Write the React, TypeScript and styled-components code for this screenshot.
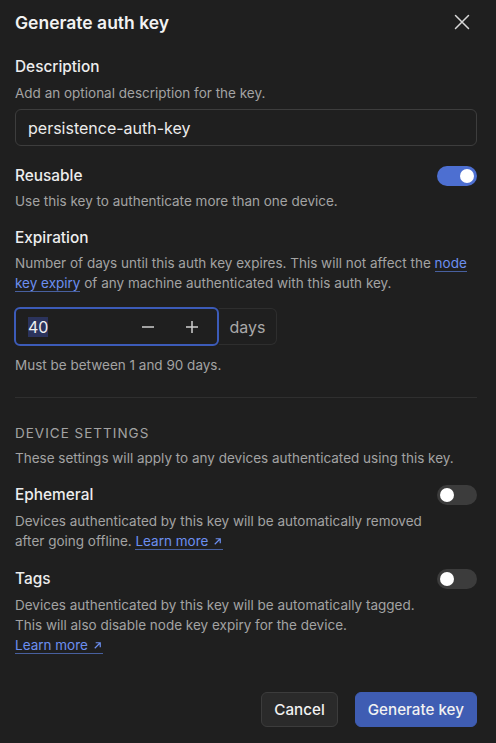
import React from "react";
import styled, { createGlobalStyle } from "styled-components";

const Global = createGlobalStyle`
  html, body { margin: 0; padding: 0; background: #1f1f1f; }
  body { font-family: Inter, "Noto Sans", sans-serif; color: #ececec; -webkit-font-smoothing: antialiased; }
  * { box-sizing: border-box; }
`;

const Dialog = styled.div`
  width: 496px;
  height: 743px;
  background: #1f1f1f;
  padding: 0 19px 0 15px;
  display: flex;
  flex-direction: column;
`;

const Header = styled.div`
  height: 44px;
  display: flex;
  align-items: center;
  justify-content: space-between;
`;

const Title = styled.h1`
  margin: 0;
  font-size: 17.5px;
  font-weight: 600;
  color: #f2f2f2;
`;

const Close = styled.button`
  background: none;
  border: 0;
  padding: 0;
  width: 16px;
  height: 16px;
  margin-right: 7px;
  color: #d8d8d8;
  display: flex;
`;

const Section = styled.div<{ $top?: number }>`
  margin-top: ${(p) => p.$top ?? 0}px;
  display: flex;
  flex-direction: column;
`;

const Row = styled.div`
  display: flex;
  align-items: center;
  justify-content: space-between;
`;

const Label = styled.div`
  font-size: 15.4px;
  font-weight: 500;
  line-height: 24px;
  color: #ededed;
`;

const Hint = styled.div<{ $top?: number; $width?: number }>`
  font-size: 13.5px;
  line-height: 20px;
  color: #a3a3a3;
  margin-top: ${(p) => p.$top ?? 4}px;
  ${(p) => (p.$width ? `max-width: ${p.$width}px;` : "")}
`;

const Link = styled.a`
  color: #6c8ff0;
  text-decoration: none;
  border-bottom: 1px solid #48609f;
  cursor: pointer;
`;

const TextInput = styled.div`
  margin-top: 6px;
  height: 37px;
  border: 1px solid #3d3d3d;
  border-radius: 6px;
  padding: 0 12px;
  display: flex;
  align-items: center;
  font-size: 16px;
  color: #ececec;
`;

const Toggle = styled.div<{ $on?: boolean }>`
  width: 40px;
  height: 20px;
  border-radius: 10px;
  background: ${(p) => (p.$on ? "#4d6fd1" : "#3c3c3c")};
  position: relative;
  flex-shrink: 0;
  &::after {
    content: "";
    position: absolute;
    top: 3px;
    left: ${(p) => (p.$on ? "23px" : "3px")};
    width: 14px;
    height: 14px;
    border-radius: 50%;
    background: #ffffff;
  }
`;

const NumberGroup = styled.div`
  margin-top: 14px;
  display: flex;
  align-items: center;
`;

const NumberBox = styled.div`
  width: 205px;
  height: 39px;
  border: 2px solid #3c5bb8;
  border-radius: 6px;
  display: flex;
  align-items: center;
  padding-left: 12px;
  margin-left: -1px;
`;

const Value = styled.span`
  font-size: 16px;
  color: #f0f0f0;
  background: #2b335c;
  line-height: 20px;
`;

const Spacer = styled.div`
  flex: 1;
`;

const Stepper = styled.span`
  width: 20px;
  height: 20px;
  display: flex;
  align-items: center;
  justify-content: center;
  color: #cfcfcf;
  margin-right: 24px;
  &:last-child { margin-right: 15px; }
`;

const Addon = styled.div`
  height: 37px;
  width: 58px;
  border: 1px solid #2e2e2e;
  border-left: 0;
  border-radius: 0 6px 6px 0;
  display: flex;
  align-items: center;
  justify-content: center;
  font-size: 16px;
  color: #a9a9a9;
`;

const Divider = styled.hr`
  margin: 22px 0 0;
  border: 0;
  border-top: 1px solid #2f2f2f;
`;

const Overline = styled.div`
  margin-top: 25px;
  font-size: 13.5px;
  line-height: 20px;
  letter-spacing: 1px;
  color: #a3a3a3;
  text-transform: uppercase;
`;

const Footer = styled.div`
  margin-top: auto;
  margin-bottom: 16px;
  display: flex;
  justify-content: flex-end;
  gap: 17px;
`;

const Button = styled.button<{ $primary?: boolean }>`
  height: 35px;
  padding: 0 12px;
  border-radius: 6px;
  font-family: inherit;
  font-size: 15.2px;
  font-weight: 500;
  color: #f2f2f2;
  background: ${(p) => (p.$primary ? "#3f5db3" : "#2a2a2a")};
  border: 1px solid ${(p) => (p.$primary ? "#3f5db3" : "#3c3c3c")};
`;

const Arrow = () => (
  <svg width="11" height="11" viewBox="0 0 12 12" style={{ marginLeft: 4, verticalAlign: -1 }}>
    <path d="M3 9 L9 3 M4 3 H9 V8" stroke="currentColor" strokeWidth="1.3" fill="none" />
  </svg>
);

export default function App() {
  return (
    <>
      <Global />
      <Dialog>
        <Header>
          <Title>Generate auth key</Title>
          <Close aria-label="Close">
            <svg width="16" height="16" viewBox="0 0 16 16">
              <path d="M1.5 1.5 L14.5 14.5 M14.5 1.5 L1.5 14.5" stroke="currentColor" strokeWidth="1.5" strokeLinecap="round" />
            </svg>
          </Close>
        </Header>

        <Section $top={11}>
          <Label>Description</Label>
          <Hint>Add an optional description for the key.</Hint>
          <TextInput>persistence-auth-key</TextInput>
        </Section>

        <Section $top={18}>
          <Row>
            <Label>Reusable</Label>
            <Toggle $on />
          </Row>
          <Hint $top={3}>Use this key to authenticate more than one device.</Hint>
        </Section>

        <Section $top={15}>
          <Label>Expiration</Label>
          <Hint $top={3}>
            Number of days until this auth key expires. This will not affect the <Link>node key expiry</Link> of any
            machine authenticated with this auth key.
          </Hint>
          <NumberGroup>
            <NumberBox>
              <Value>40</Value>
              <Spacer />
              <Stepper>
                <svg width="14" height="14" viewBox="0 0 14 14">
                  <path d="M1 7 H13" stroke="currentColor" strokeWidth="1.5" />
                </svg>
              </Stepper>
              <Stepper>
                <svg width="14" height="14" viewBox="0 0 14 14">
                  <path d="M1 7 H13 M7 1 V13" stroke="currentColor" strokeWidth="1.5" />
                </svg>
              </Stepper>
            </NumberBox>
            <Addon>days</Addon>
          </NumberGroup>
          <Hint $top={9}>Must be between 1 and 90 days.</Hint>
        </Section>

        <Divider />

        <Overline>Device settings</Overline>
        <Hint $top={5}>These settings will apply to any devices authenticated using this key.</Hint>

        <Section $top={15}>
          <Row>
            <Label>Ephemeral</Label>
            <Toggle />
          </Row>
          <Hint $width={430}>
            Devices authenticated by this key will be automatically removed after going offline.{" "}
            <Link>
              Learn more
              <Arrow />
            </Link>
          </Hint>
        </Section>

        <Section $top={16}>
          <Row>
            <Label>Tags</Label>
            <Toggle />
          </Row>
          <Hint $width={430}>
            Devices authenticated by this key will be automatically tagged.
            <br />
            This will also disable node key expiry for the device.
            <br />
            <Link>
              Learn more
              <Arrow />
            </Link>
          </Hint>
        </Section>

        <Footer>
          <Button>Cancel</Button>
          <Button $primary>Generate key</Button>
        </Footer>
      </Dialog>
    </>
  );
}
